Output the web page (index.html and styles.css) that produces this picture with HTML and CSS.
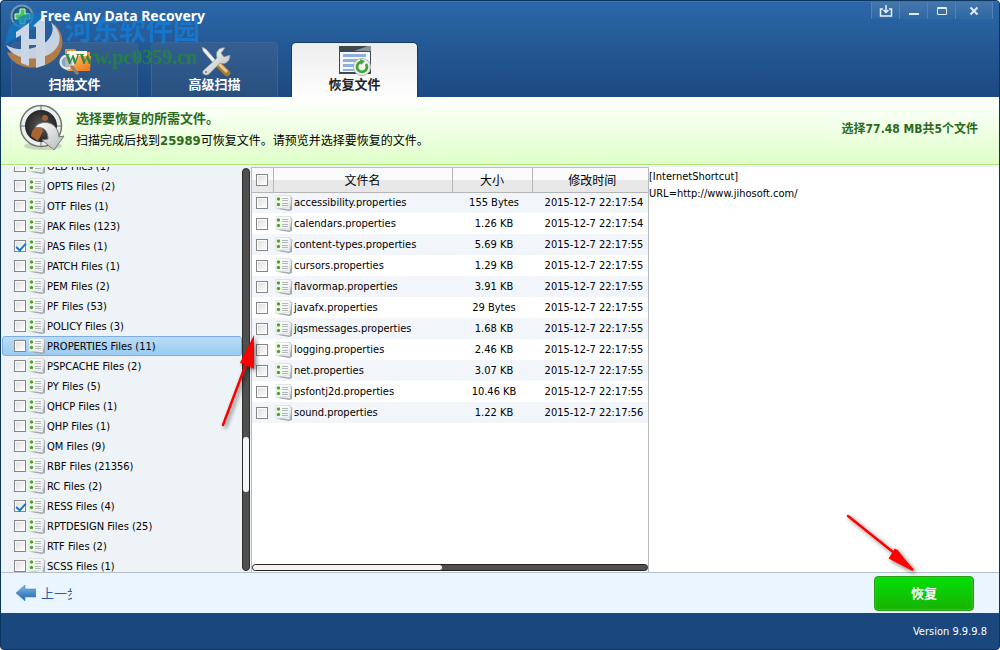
FILE: index.html
```html
<!DOCTYPE html>
<html lang="zh-CN">
<head>
<meta charset="utf-8">
<title>Free Any Data Recovery</title>
<link rel="stylesheet" href="styles.css">
</head>
<body>
<svg class="defs" aria-hidden="true">
  <defs>
    <linearGradient id="gPaper" x1="0" y1="0" x2="1" y2="1"><stop offset="0" stop-color="#fff"/><stop offset="1" stop-color="#eceeef"/></linearGradient>
    <linearGradient id="gArrow" x1="0" y1="0" x2="0" y2="1"><stop offset="0" stop-color="#7cb8e8"/><stop offset="1" stop-color="#1d62a8"/></linearGradient>
    <linearGradient id="gMetal" x1="0" y1="0" x2="1" y2="1"><stop offset="0" stop-color="#fff"/><stop offset="1" stop-color="#b4b8b8"/></linearGradient>
    <linearGradient id="gOrange" x1="0" y1="0" x2="1" y2="1"><stop offset="0" stop-color="#ffc36b"/><stop offset="1" stop-color="#e9751a"/></linearGradient>
    <radialGradient id="gDark"><stop offset="0" stop-color="#5e5a58"/><stop offset="1" stop-color="#252628"/></radialGradient>
    <radialGradient id="gOrb"><stop offset="0" stop-color="#2c9fc0"/><stop offset="1" stop-color="#14507c"/></radialGradient>
    <filter id="soft" x="-30%" y="-30%" width="160%" height="160%"><feDropShadow dx="2" dy="2" stdDeviation="2" flood-color="#000" flood-opacity=".55"/></filter>
    <symbol id="file" viewBox="0 0 18 16">
      <path d="M3 14 14 16 17 15 17 3Z" fill="#a5a9ac"/>
      <path d="M2 13 15 15 17 3 15 1Z" fill="#f6f6f6" stroke="#9a9ea0" stroke-width=".7"/>
      <path d="M1 .5H15.500L14.500 12.500 1 13.500Z" fill="url(#gPaper)" stroke="#d4d7d9" stroke-width=".7"/>
      <path d="M7 3.500h6M7 5.500h6M7 8.500h6M7 10.500h6" stroke="#b2b7ba" stroke-width="1"/>
      <circle cx="3.500" cy="4" r="1.700" fill="#4aa818"/><circle cx="3.500" cy="9.500" r="1.700" fill="#4aa818"/>
    </symbol>
  </defs>
</svg>
<div class="window">
  <header class="header">
    <div class="titlebar">
      <svg class="app-icon" viewBox="0 0 24 24" aria-hidden="true"><circle cx="12" cy="12" r="11.500" fill="#7895ae"/><circle cx="12" cy="12" r="9.500" fill="url(#gOrb)"/><path d="M10 5h5v5h5v5h-5v5h-5v-5H5v-5h5Z" fill="#4cc456" stroke="#d5f5dd" stroke-width="1"/></svg>
      <h1 class="title">Free Any Data Recovery</h1>
      <div class="controls">
        <button class="control" aria-label="下载"><svg viewBox="0 0 14 14"><path d="M4 5H1.500v7h11V5H10M7 1v7M4.500 6 7 8.500 9.500 6" fill="none" stroke="#e9f1fa" stroke-width="1.500"/></svg></button>
        <button class="control" aria-label="最小化"><svg viewBox="0 0 14 14"><path d="M2 10h10" stroke="#e0ebf6" stroke-width="2"/></svg></button>
        <button class="control" aria-label="最大化"><svg viewBox="0 0 14 14"><path d="M2.500 3.500h9v7h-9zM2 4.500h10" fill="none" stroke="#e0ebf6"/></svg></button>
        <button class="control control-close" aria-label="关闭"><svg viewBox="0 0 14 14"><path d="m3.500 3.500 7 7m0-7-7 7" stroke="#e0ebf6" stroke-width="2"/></svg></button>
      </div>
    </div>
    <nav class="tabs">
      <button class="tab">
        <svg class="tab-icon" viewBox="0 0 34 32" aria-hidden="true"><path d="M7 4h10l2 3h13v18H7z" fill="#e9943c"/><path d="M9 6h20v8H9z" fill="#fdf6e6"/><path d="M9 14h8l2-3h14l-1 15H9z" fill="url(#gOrange)"/><circle cx="9" cy="17" r="6.500" fill="#a5bdd6" fill-opacity=".75" stroke="#e5eaee" stroke-width="2.200"/><path d="m14 22 5 6" stroke="#8b8072" stroke-width="3.500" stroke-linecap="round"/></svg>
        <span>扫描文件</span>
      </button>
      <button class="tab">
        <svg class="tab-icon" viewBox="0 0 34 32" aria-hidden="true"><path d="m19 18 10 10" stroke="#a67b38" stroke-width="6.500" stroke-linecap="round"/><path d="m20 18 9 9" stroke="#e8c98d" stroke-width="3"/><path d="M4 2 8 4 20 18 17 20 5 6Z" fill="#f2f2f0" stroke="#8f9799" stroke-width=".6"/><path d="M6 25 19 13C17 7 21 2 27 3L23 8l3 4 6-2c0 7-5 10-10 8L11 29c-3 3-9-1-5-4Z" fill="url(#gMetal)" stroke="#8a9296" stroke-width=".7"/><circle cx="8" cy="27" r="1" fill="#707577"/></svg>
        <span>高级扫描</span>
      </button>
      <button class="tab tab-active" aria-current="page">
        <svg class="tab-icon" viewBox="0 0 34 32" aria-hidden="true"><path d="M1 1h32v28H1z" fill="#3e484f"/><path d="M2 7h30v20H2z" fill="#f5f8fb"/><path d="M16 6 30 1h3v5Z" fill="#8a939b"/><path d="M5 9h23v3H5zM5 14h23v3H5zM5 19h13v3H5zM5 24h11v2H5z" fill="#8fb0dc"/><circle cx="24" cy="22" r="8.500" fill="#f3f3f1" stroke="#b3b5b2"/><path d="M23 17a5 5 0 1 0 5 2" fill="none" stroke="#42a63d" stroke-width="2.800"/><path d="m22 14 5 2-4 4Z" fill="#42a63d"/></svg>
        <span>恢复文件</span>
      </button>
    </nav>
    <div class="watermark" aria-hidden="true">
      <svg class="mark" viewBox="0 0 60 56"><path d="M1 32C0 16 10 4 26 1h16l-6 10-18 12Z" fill="#0f7bc6" opacity=".75"/><path d="M49 12c9 8 11 20 5 30-8 12-24 16-37 12C9 51 4 46 2 40c18 4 34 0 43-9 5-6 6-12 4-19Z" fill="#bd7d42"/><path d="M1 33c11 7 31 5 41-4 6-6 7-13 4-19 10 9 12 20 3 29C37 50 9 50 1 33Z" fill="#d3dce8"/><path d="m11 20 13-9v43l-8-3V23l-5 3ZM28 14l12-11v50l-9 3V33h-7v-6h7V15Z" fill="#d9e2ed"/></svg>
      <div class="mark-text"><span class="mark-name">河东软件园</span><span class="mark-url">www.pc0359.cn</span></div>
    </div>
  </header>

  <section class="banner">
    <svg class="banner-icon" viewBox="0 0 48 48" aria-hidden="true"><ellipse cx="24" cy="42" rx="19" ry="4" fill="#b7c7a9" opacity=".7"/><circle cx="22" cy="22" r="20.500" fill="#eceeec" stroke="#6f7473" stroke-width="1.500"/><path d="M22 2v40M2 22h40" stroke="#6f7473"/><circle cx="22" cy="22" r="16" fill="url(#gDark)"/><path d="M12 32c1-7 5-10 10-9l2 4-5 10Z" fill="#a96632"/><circle cx="26" cy="14" r="3" fill="#99613e"/><path d="M16 24c3-8 23-9 24 9l5-1-10 14-12-10 6-1c0-8-4-13-13-11Z" fill="url(#gMetal)" stroke="#75797a"/></svg>
    <div class="banner-text">
      <p class="banner-title">选择要恢复的所需文件。</p>
      <p class="banner-info">扫描完成后找到<strong>25989</strong>可恢复文件。请预览并选择要恢复的文件。</p>
    </div>
    <p class="summary">选择77.48 MB共5个文件</p>
  </section>

  <main class="content">
    <div class="sidebar">
      <ul class="types">
        <li><label class="type"><input type="checkbox" class="check"><svg class="file"><use href="#file"/></svg>OLD Files (1)</label></li>
        <li><label class="type"><input type="checkbox" class="check"><svg class="file"><use href="#file"/></svg>OPTS Files (2)</label></li>
        <li><label class="type"><input type="checkbox" class="check"><svg class="file"><use href="#file"/></svg>OTF Files (1)</label></li>
        <li><label class="type"><input type="checkbox" class="check"><svg class="file"><use href="#file"/></svg>PAK Files (123)</label></li>
        <li><label class="type"><input type="checkbox" class="check" checked><svg class="file"><use href="#file"/></svg>PAS Files (1)</label></li>
        <li><label class="type"><input type="checkbox" class="check"><svg class="file"><use href="#file"/></svg>PATCH Files (1)</label></li>
        <li><label class="type"><input type="checkbox" class="check"><svg class="file"><use href="#file"/></svg>PEM Files (2)</label></li>
        <li><label class="type"><input type="checkbox" class="check"><svg class="file"><use href="#file"/></svg>PF Files (53)</label></li>
        <li><label class="type"><input type="checkbox" class="check"><svg class="file"><use href="#file"/></svg>POLICY Files (3)</label></li>
        <li><label class="type type-selected"><input type="checkbox" class="check"><svg class="file"><use href="#file"/></svg>PROPERTIES Files (11)</label></li>
        <li><label class="type"><input type="checkbox" class="check"><svg class="file"><use href="#file"/></svg>PSPCACHE Files (2)</label></li>
        <li><label class="type"><input type="checkbox" class="check"><svg class="file"><use href="#file"/></svg>PY Files (5)</label></li>
        <li><label class="type"><input type="checkbox" class="check"><svg class="file"><use href="#file"/></svg>QHCP Files (1)</label></li>
        <li><label class="type"><input type="checkbox" class="check"><svg class="file"><use href="#file"/></svg>QHP Files (1)</label></li>
        <li><label class="type"><input type="checkbox" class="check"><svg class="file"><use href="#file"/></svg>QM Files (9)</label></li>
        <li><label class="type"><input type="checkbox" class="check"><svg class="file"><use href="#file"/></svg>RBF Files (21356)</label></li>
        <li><label class="type"><input type="checkbox" class="check"><svg class="file"><use href="#file"/></svg>RC Files (2)</label></li>
        <li><label class="type"><input type="checkbox" class="check" checked><svg class="file"><use href="#file"/></svg>RESS Files (4)</label></li>
        <li><label class="type"><input type="checkbox" class="check"><svg class="file"><use href="#file"/></svg>RPTDESIGN Files (25)</label></li>
        <li><label class="type"><input type="checkbox" class="check"><svg class="file"><use href="#file"/></svg>RTF Files (2)</label></li>
        <li><label class="type"><input type="checkbox" class="check"><svg class="file"><use href="#file"/></svg>SCSS Files (1)</label></li>
      </ul>
      <div class="vtrack"><div class="space-before"></div><div class="vthumb"></div><div class="space-after"></div></div>
    </div>

    <div class="files">
      <table class="table">
        <colgroup><col class="col-check"><col><col class="col-size"><col class="col-date"></colgroup>
        <thead><tr><th><input type="checkbox" class="check" aria-label="全选"></th><th>文件名</th><th>大小</th><th>修改时间</th></tr></thead>
        <tbody>
          <tr><td><input type="checkbox" class="check" id="f1"></td><td><label class="name" for="f1"><svg class="file"><use href="#file"/></svg>accessibility.properties</label></td><td>155 Bytes</td><td>2015-12-7 22:17:54</td></tr>
          <tr><td><input type="checkbox" class="check" id="f2"></td><td><label class="name" for="f2"><svg class="file"><use href="#file"/></svg>calendars.properties</label></td><td>1.26 KB</td><td>2015-12-7 22:17:54</td></tr>
          <tr><td><input type="checkbox" class="check" id="f3"></td><td><label class="name" for="f3"><svg class="file"><use href="#file"/></svg>content-types.properties</label></td><td>5.69 KB</td><td>2015-12-7 22:17:55</td></tr>
          <tr><td><input type="checkbox" class="check" id="f4"></td><td><label class="name" for="f4"><svg class="file"><use href="#file"/></svg>cursors.properties</label></td><td>1.29 KB</td><td>2015-12-7 22:17:55</td></tr>
          <tr><td><input type="checkbox" class="check" id="f5"></td><td><label class="name" for="f5"><svg class="file"><use href="#file"/></svg>flavormap.properties</label></td><td>3.91 KB</td><td>2015-12-7 22:17:55</td></tr>
          <tr><td><input type="checkbox" class="check" id="f6"></td><td><label class="name" for="f6"><svg class="file"><use href="#file"/></svg>javafx.properties</label></td><td>29 Bytes</td><td>2015-12-7 22:17:55</td></tr>
          <tr><td><input type="checkbox" class="check" id="f7"></td><td><label class="name" for="f7"><svg class="file"><use href="#file"/></svg>jqsmessages.properties</label></td><td>1.68 KB</td><td>2015-12-7 22:17:55</td></tr>
          <tr><td><input type="checkbox" class="check" id="f8"></td><td><label class="name" for="f8"><svg class="file"><use href="#file"/></svg>logging.properties</label></td><td>2.46 KB</td><td>2015-12-7 22:17:55</td></tr>
          <tr><td><input type="checkbox" class="check" id="f9"></td><td><label class="name" for="f9"><svg class="file"><use href="#file"/></svg>net.properties</label></td><td>3.07 KB</td><td>2015-12-7 22:17:55</td></tr>
          <tr><td><input type="checkbox" class="check" id="f10"></td><td><label class="name" for="f10"><svg class="file"><use href="#file"/></svg>psfontj2d.properties</label></td><td>10.46 KB</td><td>2015-12-7 22:17:55</td></tr>
          <tr><td><input type="checkbox" class="check" id="f11"></td><td><label class="name" for="f11"><svg class="file"><use href="#file"/></svg>sound.properties</label></td><td>1.22 KB</td><td>2015-12-7 22:17:56</td></tr>
        </tbody>
      </table>
      <div class="htrack"><div class="hthumb"></div></div>
    </div>

    <div class="preview"><p>[InternetShortcut]</p><p>URL=http://www.jihosoft.com/</p></div>
    <svg class="pointer pointer-list" viewBox="0 0 50 100" aria-hidden="true"><g filter="url(#soft)"><path d="M9 91 32 30" stroke="#f00" stroke-width="2.500" stroke-linecap="round"/><path d="M40 1 40 35 32 31 26 29Z" fill="#f00"/></g></svg>
    <svg class="pointer pointer-action" viewBox="0 0 80 70" aria-hidden="true"><g filter="url(#soft)"><path d="M7 9 52 45" stroke="#f00" stroke-width="2.500" stroke-linecap="round"/><path d="M72 63 48 51 52 47 56 42Z" fill="#f00"/><path d="M72 63 49 51 54 43Z" stroke="#f00" stroke-width="2" fill="#f00"/></g></svg>
  </main>

  <div class="actions">
    <button class="back"><svg class="back-icon" viewBox="0 0 20 18" aria-hidden="true"><path d="M0 9 9 1v4h11v8H9v4Z" fill="url(#gArrow)" stroke="#4b8cc8" stroke-width=".6"/></svg><span class="back-text">上一步</span></button>
    <button class="recover">恢复</button>
  </div>
  <footer class="footer">Version 9.9.9.8</footer>
</div>
</body>
</html>
```
FILE: styles.css
```css
* { box-sizing: border-box; }
body, p, h1, ul { margin: 0; padding: 0; }
body {
  font: 11px/17px "DejaVu Sans Condensed", "Noto Sans", "Noto Sans CJK SC", sans-serif;
  color: #000;
  background: #fff;
}
button { font: inherit; border: 0; padding: 0; background: none; }
.defs { position: absolute; width: 0; height: 0; }

.window {
  display: flex;
  flex-direction: column;
  height: 100vh;
  border: 1px solid #0b365e;
  border-radius: 4px;
  overflow: hidden;
  background: #1a477d;
}

/* Header */
.header {
  position: relative;
  display: flex;
  flex-direction: column;
  justify-content: space-between;
  flex: none;
  height: 96px;
  background: linear-gradient(#2b67a8, #1c4980);
  border-top: 1px solid #3e74ad;
}
.titlebar { display: flex; align-items: flex-start; padding: 0 6px 0 9px; }
.app-icon { width: 24px; height: 24px; margin-top: 2px; }
.title {
  position: relative;
  z-index: 1;
  margin: 4px auto 0 6px;
  font: bold 14px/20px "Noto Sans", sans-serif;
  color: #fff;
}
.controls { display: flex; }
.control {
  display: grid;
  place-items: center;
  width: 28px;
  height: 17px;
  border-left: 1px solid #5183b6;
  background: linear-gradient(#4577ac, #2f67a2);
}
.control-close { width: 38px; border-right: 1px solid #5183b6; }
.control svg { width: 14px; height: 14px; }
.tabs { display: flex; gap: 13px; padding-left: 10px; }
.tab {
  display: flex;
  flex-direction: column;
  align-items: center;
  justify-content: flex-start;
  width: 127px;
  height: 55px;
  padding-top: 2px;
  border: 1px solid #3c6595;
  border-bottom: 0;
  border-radius: 5px 5px 0 0;
  background: linear-gradient(#345f91, #28507f);
  color: #fff;
  font: bold 13px/14px "Noto Sans CJK SC", sans-serif;
}
.tab-active { background: linear-gradient(#ededee, #fefefe); border-color: #183a63; color: #222; }
.tab-icon { width: 34px; height: 32px; flex: none; }
.watermark { position: absolute; left: 4px; top: 10px; display: flex; pointer-events: none; opacity: .92; }
.mark { width: 60px; height: 56px; }
.mark-text { display: flex; flex-direction: column; }
.mark-name { font: bold 27px/34px "Noto Sans CJK SC", sans-serif; color: #1679cd; }
.mark-url { font: bold 20px/22px "Liberation Serif", serif; color: #248441; }

/* Banner */
.banner {
  display: flex;
  flex: none;
  height: 68px;
  padding: 7px 21px 0 18px;
  background: linear-gradient(#fff, #dfffc8);
  border-bottom: 1px solid #b5e27f;
}
.banner-icon { width: 48px; height: 48px; }
.banner-text { margin: 5px auto 0 9px; }
.banner-title, .summary { font: bold 13px/20px "DejaVu Sans Condensed", "Noto Sans CJK SC", sans-serif; color: #2c6a1c; }
.banner-info { font: 12px/21px "Noto Sans CJK SC", sans-serif; }
.banner-info strong { font: bold 13px/20px "DejaVu Sans Condensed", "Noto Sans", sans-serif; color: #2c6a1c; }
.summary { margin-top: 15px; font-size: 12px; }

/* Content */
.content {
  position: relative;
  display: flex;
  flex: 1;
  min-height: 0;
  padding-top: 2px;
  background: #edf3f6;
  border-bottom: 1px solid #b7c2c8;
}
.sidebar { display: flex; width: 250px; overflow: hidden; }
.types { flex: 1; list-style: none; margin-top: -11px; padding-left: 1px; }
.type {
  display: flex;
  align-items: center;
  height: 20px;
  padding-left: 11px;
  border: 1px solid transparent;
  border-radius: 3px;
}
.type-selected { background: linear-gradient(#b9dcf8, #9acbf0); border-color: #7eaee0; }
.file { width: 18px; height: 16px; margin: 0 1px 0 2px; flex: none; }
.check {
  appearance: none;
  display: block;
  flex: none;
  width: 12px;
  height: 12px;
  margin: 0;
  border: 1px solid #858585;
  background: linear-gradient(135deg, #dcdcdc, #fff);
  box-shadow: inset 0 0 0 1px #fff;
}
.check:checked::after {
  content: "";
  display: block;
  width: 4px;
  height: 8px;
  margin: 0 0 0 3px;
  border: solid #1479c4;
  border-width: 0 2px 2px 0;
  transform: rotate(42deg);
}
.vtrack {
  display: flex;
  flex-direction: column;
  width: 8px;
  margin: 1px 1px 1px 0;
  border: 1px solid #2c2c2c;
  border-radius: 4px;
  background: #505050;
}
.space-before { flex: 268; }
.vthumb { flex: 55; border-radius: 3px; background: #f4f4f4; }
.space-after { flex: 78; }

.files {
  display: flex;
  flex-direction: column;
  justify-content: space-between;
  width: 398px;
  border: solid #b7bcc0;
  border-width: 1px 1px 0;
  background: #fff;
}
.table { width: 100%; border-collapse: collapse; table-layout: fixed; }
.col-check { width: 21px; }
.col-size { width: 80px; }
.col-date { width: 116px; }
.table th {
  height: 24px;
  padding: 0;
  border-right: 1px solid #b5b5b5;
  border-bottom: 1px solid #b5b5b5;
  background: linear-gradient(#fafafa 50%, #e8e8e8 50%);
  font: 12px/18px "Noto Sans CJK SC", sans-serif;
}
.table th:last-child { border-right: 0; padding-left: 4px; }
.table td { height: 21px; padding: 0; text-align: center; }
.table td:nth-child(3) { padding-left: 4px; }
.table td:last-child { padding-left: 8px; }
.table tbody tr:nth-child(odd) { background: #f2f6fb; }
.table .check { margin-left: 4px; }
.name { display: flex; align-items: center; text-align: left; }
.htrack { flex: none; height: 7px; margin: 0 0 1px; border: 1px solid #222; border-radius: 4px; background: #505050; }
.hthumb { width: 48%; height: 5px; border-radius: 3px; background: #f4f4f4; }
.preview { flex: 1; padding-top: 1px; background: #fff; }

.pointer { position: absolute; overflow: visible; }
.pointer-list { left: 213px; top: 169px; width: 50px; height: 100px; }
.pointer-action { right: 78px; bottom: -5px; width: 80px; height: 70px; }

/* Bottom bars */
.actions {
  display: flex;
  align-items: center;
  justify-content: space-between;
  flex: none;
  height: 40px;
  padding: 0 25px 0 15px;
  background: #eaf5ff;
}
.back { display: flex; align-items: center; gap: 5px; }
.back-icon { width: 20px; height: 18px; }
.back-text { width: 31px; overflow: hidden; white-space: nowrap; text-align: left; font: 13px/20px "Noto Sans CJK SC", sans-serif; color: #2d5c9e; }
.recover {
  width: 100px;
  height: 35px;
  border: 1px solid #2a9b15;
  border-radius: 4px;
  background: linear-gradient(#03df06, #18b303);
  box-shadow: inset 0 0 0 1px #37c522;
  color: #fff;
  font: bold 13px/20px "Noto Sans CJK SC", sans-serif;
}
.footer { flex: none; height: 36px; padding: 10px 12px 0 0; text-align: right; color: #fff; }
```
